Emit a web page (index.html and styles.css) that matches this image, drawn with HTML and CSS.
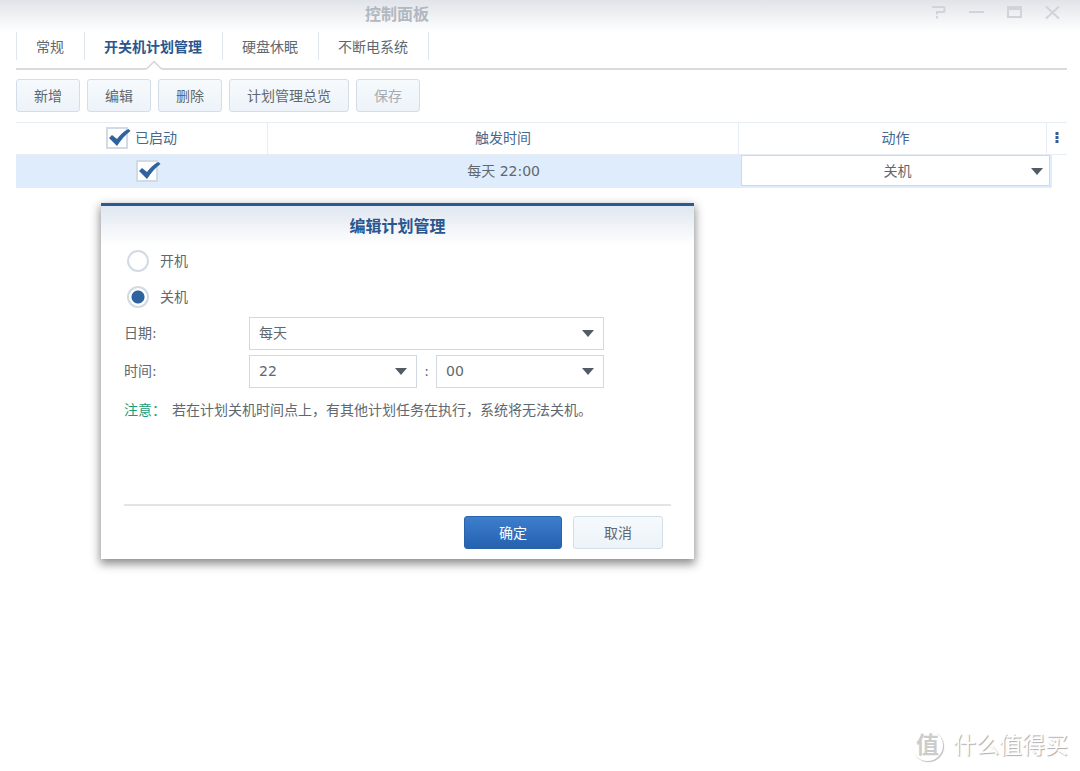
FILE: index.html
```html
<!DOCTYPE html>
<html lang="zh-CN">
<head>
<meta charset="utf-8">
<meta name="viewport" content="width=device-width, initial-scale=1">
<title>控制面板</title>
<link rel="stylesheet" href="styles.css">
</head>
<body>
<header class="titlebar">
  <h1 class="window-title">控制面板</h1>
  <div class="window-controls">
    <button type="button" aria-label="帮助"><svg viewBox="0 0 16 16"><path d="M2 2h11q1.500 0 1.500 1.500v2q0 1.500-1.500 1.500H7v2.500M7 11v2.500" fill="none" stroke="currentColor" stroke-width="2"/></svg></button>
    <button type="button" aria-label="最小化"><svg viewBox="0 0 16 16"><path d="M1 7h15" fill="none" stroke="currentColor" stroke-width="2"/></svg></button>
    <button type="button" aria-label="最大化"><svg viewBox="0 0 16 16"><path d="M1 1h15v12H1zM3 5v6h11V5z" fill="currentColor" fill-rule="evenodd"/></svg></button>
    <button type="button" aria-label="关闭"><svg viewBox="0 0 16 16"><path d="M2 1.500l13 12M15 1.500l-13 12" fill="none" stroke="currentColor" stroke-width="2"/></svg></button>
  </div>
</header>

<main class="panel">
  <nav class="tabs">
    <a class="tab" href="#general">常规</a>
    <a class="tab active" href="#schedule" aria-current="page">开关机计划管理<svg class="notch" viewBox="0 0 16 10"><path d="M0 8.500L8 1l8 7.500V10H0z" fill="#fff"/><path d="M0 8.500h1L8 1.500l7 7h1" fill="none" stroke="#d3d5d7" stroke-width="1.500"/></svg></a>
    <a class="tab" href="#hibernate">硬盘休眠</a>
    <a class="tab" href="#ups">不断电系统</a>
  </nav>

  <div class="toolbar">
    <button class="btn" type="button">新增</button>
    <button class="btn" type="button">编辑</button>
    <button class="btn" type="button">删除</button>
    <button class="btn" type="button">计划管理总览</button>
    <button class="btn" type="button" disabled>保存</button>
  </div>

  <table class="schedule">
    <colgroup><col class="col-enabled"><col class="col-time"><col class="col-action"><col class="col-edge"><col class="col-menu"></colgroup>
    <thead>
      <tr>
        <th><label class="check-label"><span class="check"><input type="checkbox" checked><svg viewBox="0 0 25 22"><path d="M3 11l3-3 5 4C14 8 18 4 22.500 2l2 2C19 8 15 13 11 19z" fill="#2f639f"/></svg></span>已启动</label></th>
        <th>触发时间</th>
        <th class="action-head">动作</th>
        <th colspan="2"><button class="more" type="button" aria-label="更多列"><svg viewBox="0 0 4 12"><path d="M.5 0h3v3h-3zM.5 4h3v3h-3zM.5 8h3v3h-3z" fill="#2f5f99"/></svg></button></th>
      </tr>
    </thead>
    <tbody>
      <tr>
        <td class="enabled"><span class="check"><input type="checkbox" checked aria-label="启动该计划"><svg viewBox="0 0 25 22"><path d="M3 11l3-3 5 4C14 8 18 4 22.500 2l2 2C19 8 15 13 11 19z" fill="#2f639f"/></svg></span></td>
        <td>每天 22:00</td>
        <td class="action" colspan="2"><span class="select"><select aria-label="动作"><option>关机</option></select></span></td>
      </tr>
    </tbody>
  </table>
</main>

<section class="dialog" role="dialog" aria-labelledby="dialog-title">
  <h2 class="dialog-title" id="dialog-title">编辑计划管理</h2>
  <form class="dialog-form">
    <label class="radio"><input type="radio" name="power">开机</label>
    <label class="radio"><input type="radio" name="power" checked>关机</label>
    <div class="field">
      <label for="date">日期:</label>
      <span class="select"><select id="date"><option>每天</option></select></span>
    </div>
    <div class="field">
      <label for="hour">时间:</label>
      <div class="time">
        <span class="select"><select id="hour"><option>22</option></select></span>
        <span class="colon">:</span>
        <span class="select"><select id="minute" aria-label="分钟"><option>00</option></select></span>
      </div>
    </div>
    <p class="note"><strong>注意：</strong><span>若在计划关机时间点上，有其他计划任务在执行，系统将无法关机。</span></p>
    <div class="dialog-actions">
      <button class="btn primary" type="button">确定</button>
      <button class="btn cancel" type="button">取消</button>
    </div>
  </form>
</section>

<aside class="watermark"><span class="seal">值</span><span>什么值得买</span></aside>
</body>
</html>
```
FILE: styles.css
```css
* {
  box-sizing: border-box;
}

body {
  margin: 0;
  min-height: 100vh;
  background: #fff;
  color: #60686f;
  font: 14px/20px "DejaVu Sans", "Noto Sans CJK SC", sans-serif;
}

button,
select {
  font: inherit;
  color: inherit;
}

.titlebar {
  display: grid;
  grid-template-columns: 73.5% 1fr;
  height: 32px;
  background: linear-gradient(#e0e4e9, #fff);
}

.window-title {
  margin: 0;
  font-size: 16px;
  line-height: 29px;
  text-align: center;
  color: #b2b8bf;
}

.window-controls {
  display: flex;
  justify-content: flex-end;
  gap: 22px;
  padding: 5px 20px 0 0;
  color: #d0d3d7;
}

.window-controls button {
  width: 16px;
  height: 16px;
  padding: 0;
  border: 0;
  background: none;
}

.window-controls svg,
.more svg {
  display: block;
  width: 100%;
  height: 100%;
}

.panel {
  padding: 0 13px 0 16px;
}

.tabs {
  display: flex;
  height: 38px;
  padding-bottom: 8px;
  border-bottom: 2px solid #d9dbdd;
}

.tab {
  position: relative;
  padding: 0 20px 0 19px;
  border-left: 1px solid #dfe6ee;
  line-height: 30px;
  color: inherit;
  text-decoration: none;
}

.tab:last-child {
  border-right: 1px solid #dfe6ee;
}

.tab.active {
  font-weight: bold;
  color: #2a568e;
}

.notch {
  position: absolute;
  left: calc(50% - 8px);
  bottom: -10px;
  width: 16px;
  height: 10px;
}

.toolbar {
  display: flex;
  gap: 7px;
  padding: 9px 0 10px;
}

.btn {
  height: 33px;
  padding: 0 17px;
  border: 1px solid #d3dee9;
  border-radius: 3px;
  background: linear-gradient(#f6fafd, #edf3f9);
}

.btn:disabled {
  color: #a5abb1;
}

.schedule {
  width: 100%;
  table-layout: fixed;
  border-collapse: separate;
  border-spacing: 0;
  text-align: center;
}

.col-enabled {
  width: 24%;
}

.col-action {
  width: 308px;
}

.col-edge {
  width: 5px;
}

.col-menu {
  width: 15px;
}

.schedule th {
  height: 33px;
  padding: 0 0 2px;
  border-top: 1px solid #e6edf5;
  border-bottom: 1px solid #e6edf5;
  border-right: 1px solid #e6edf5;
  font-weight: normal;
  color: #44698f;
}

.schedule th:last-child {
  border-right: 0;
}

.schedule .action-head {
  padding-left: 6px;
}

.schedule td {
  height: 33px;
  padding: 0 0 2px;
  background: #dfecfb;
}

.schedule .enabled {
  padding-left: 12px;
}

.schedule .action {
  padding: 0 2px 2px;
}

.action select {
  height: 31px;
  padding: 0 8px 0 12px;
  text-align-last: center;
}

.check-label {
  display: flex;
  justify-content: center;
  align-items: center;
  gap: 4px;
}

.check {
  display: inline-grid;
  width: 25px;
  height: 22px;
  vertical-align: middle;
}

.check > * {
  grid-area: 1 / 1;
}

.check svg {
  width: 25px;
  height: 22px;
  pointer-events: none;
}

.check input {
  appearance: none;
  width: 22px;
  height: 22px;
  margin: 0;
  border: 2px solid #d2dae3;
  background: #fff;
}

.more {
  display: block;
  width: 4px;
  height: 12px;
  margin: 0 8px;
  padding: 0;
  border: 0;
  background: none;
}

.select {
  position: relative;
  display: block;
}

.select::after {
  content: "";
  position: absolute;
  top: 50%;
  right: 10px;
  margin-top: -3px;
  border: 6px solid transparent;
  border-top: 7px solid #525c67;
  border-bottom: 0;
  pointer-events: none;
}

select {
  appearance: none;
  display: block;
  width: 100%;
  height: 33px;
  padding: 0 9px;
  border: 1px solid #cfd9e4;
  border-radius: 0;
  background: #fff;
}

.action .select::after {
  right: 7px;
}

.dialog {
  position: absolute;
  top: 203px;
  left: 101px;
  width: 593px;
  border-top: 3px solid #2b5a92;
  background: linear-gradient(#e0e7f0, #fff 40px);
  box-shadow: 0 4px 9px 1px rgba(0, 0, 0, 0.45);
}

.dialog-title {
  margin: 0;
  padding-top: 5px;
  font-size: 16px;
  line-height: 32px;
  text-align: center;
  color: #2a568e;
}

.dialog-form {
  padding: 0 23px 10px;
}

.radio {
  display: flex;
  align-items: center;
  gap: 11px;
  height: 36px;
  padding-left: 3px;
}

.radio input {
  appearance: none;
  width: 22px;
  height: 22px;
  margin: 0;
  border: 2px solid #d2dae3;
  border-radius: 50%;
  background: #fff;
}

.radio input:checked {
  background: radial-gradient(circle, #2f639f 6px, #fff 7px);
}

.field {
  display: grid;
  grid-template-columns: 125px 355px;
  align-items: center;
  height: 38px;
  padding-bottom: 2px;
}

.time {
  display: grid;
  grid-template-columns: 1fr 19px 1fr;
  align-items: center;
}

.colon {
  text-align: center;
}

.note {
  display: flex;
  gap: 6px;
  margin: 0;
  padding: 9px 0 84px;
}

.note strong {
  font-weight: normal;
  color: #1a9b78;
}

.dialog-actions {
  display: flex;
  justify-content: flex-end;
  gap: 11px;
  padding: 10px 8px 0 0;
  border-top: 2px solid #e2e4e5;
}

.primary {
  width: 98px;
  border-color: #2863ab;
  background: linear-gradient(#3d7fcd, #2461af);
  color: #fff;
}

.cancel {
  width: 90px;
}

.watermark {
  position: absolute;
  right: 12px;
  bottom: 10px;
  display: flex;
  align-items: center;
  gap: 10px;
  font-size: 23px;
  line-height: 32px;
  color: #fff;
  text-shadow: 1px 1px 1px #aaa;
}

.seal {
  width: 31px;
  height: 31px;
  border-radius: 50%;
  box-shadow: 1px 1px 1px #bbb;
  line-height: 30px;
  text-align: center;
  font-weight: bold;
  color: #ccc;
  text-shadow: none;
}
```
